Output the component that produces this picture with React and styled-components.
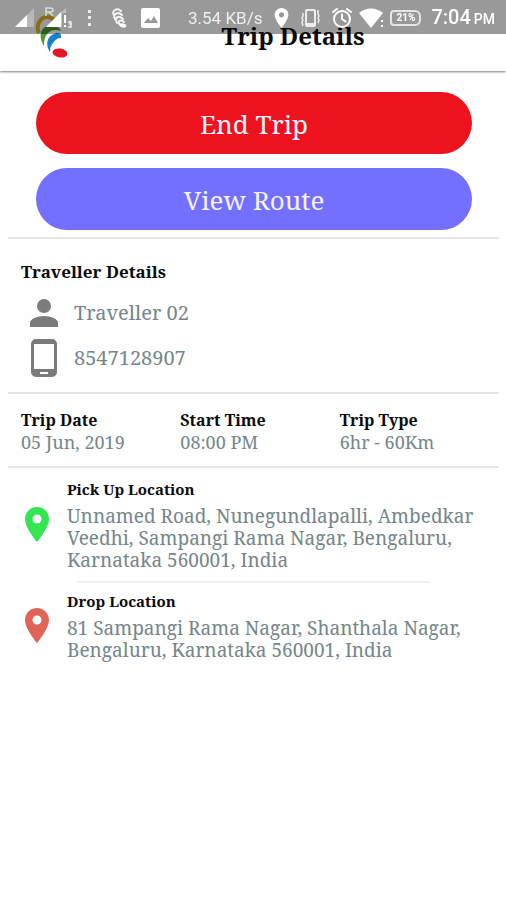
import React from "react";
import styled, { createGlobalStyle } from "styled-components";

const GlobalStyle = createGlobalStyle`
  * { box-sizing: border-box; }
  body {
    margin: 0;
    background: #fefefe;
    color: #0c0c0c;
    font-family: "Noto Serif", "DejaVu Serif Condensed", "DejaVu Serif", serif;
  }
  h1, h2, h3, p, dl, dt, dd { margin: 0; }
  svg { display: block; flex: none; }
`;

const StatusBar = styled.div`
  position: fixed;
  inset: 0 0 auto 0;
  z-index: 2;
  display: flex;
  align-items: center;
  height: 34px;
  padding: 2px 11px 0 15px;
  background: rgba(0, 0, 0, 0.4);
  color: #fff;
  font-family: Roboto, sans-serif;
`;

const StatusGroup = styled.div`
  display: flex;
  align-items: center;
  gap: ${(p) => p.$gap}px;
  margin-left: ${(p) => (p.$end ? "auto" : "0")};
`;

const Speed = styled.span`
  font-size: 17px;
  line-height: 20px;
  color: #f0f0f0;
  white-space: nowrap;
`;

const Clock = styled.time`
  margin-left: 5px;
  font-size: 20px;
  line-height: 24px;
  font-weight: 500;
  white-space: nowrap;
`;

const Meridiem = styled.span`
  margin-left: 3px;
  font-size: 14px;
`;

const Header = styled.header`
  display: grid;
  grid-template-columns: 80px 1fr;
  height: 71px;
  padding-top: 14px;
  background: #fff;
  box-shadow: 0 1px 2px rgba(0, 0, 0, 0.5);
`;

const LogoSlot = styled.div`
  padding-left: 34px;
`;

const Title = styled.h1`
  padding-top: 7px;
  font-size: 24px;
  line-height: 30px;
  font-weight: 700;
  text-align: center;
`;

const Main = styled.main`
  padding: 21px 7px 0 8px;
`;

const Actions = styled.div`
  display: grid;
  gap: 14px;
  padding: 0 27px 7px 28px;
`;

const ActionButton = styled.button`
  height: 62px;
  padding: 2px 16px 0;
  border: 0;
  border-radius: 31px;
  background: ${(p) => p.$color};
  color: #f6f3ff;
  font-family: inherit;
  font-size: 26px;
  line-height: 36px;
  cursor: pointer;
`;

const Divider = styled.hr`
  height: 2px;
  margin: 0 ${(p) => (p.$inset ? 69 : 0)}px;
  border: 0;
  background: ${(p) => (p.$inset ? "#f0f0f0" : "#e5e5e5")};
`;

const Traveller = styled.section`
  padding: 22px 13px 14px;
`;

const Label = styled.h2`
  font-size: ${(p) => (p.$large ? 17 : 15)}px;
  line-height: 22px;
  font-weight: 700;
`;

const ContactList = styled.div`
  display: grid;
  gap: 5px;
  padding-top: 10px;
`;

const ContactRow = styled.div`
  display: grid;
  grid-template-columns: 46px 1fr;
  align-items: center;
  gap: 7px;
  height: 40px;
  color: #75868a;
  font-size: 20px;
  line-height: 28px;

  svg { justify-self: center; }
`;

const Facts = styled.dl`
  display: grid;
  grid-template-columns: repeat(3, 1fr);
  padding: 15px 0 13px 13px;
`;

const FactLabel = styled.dt`
  font-size: 16px;
  line-height: 22px;
  font-weight: 700;
`;

const FactValue = styled.dd`
  font-size: 18px;
  line-height: 22px;
  color: #75868a;
`;

const Place = styled.section`
  display: grid;
  grid-template-columns: 42px 1fr;
  align-items: center;
  padding: ${(p) => (p.$last ? "7px" : "10px")} 10px 10px 17px;
`;

const Address = styled.p`
  padding-top: 5px;
  font-size: 19px;
  line-height: 22px;
  color: #75868a;
`;

const PIN = "M12 0C5.4 0 0 5.3 0 11.9 0 20.7 12 35 12 35s12-14.3 12-23.1C24 5.3 18.6 0 12 0Zm0 16.5a4.5 4.5 0 1 1 0-9 4.5 4.5 0 0 1 0 9Z";

function Pin({ color, width = 24, height = 35 }) {
  return (
    <svg width={width} height={height} viewBox="0 0 24 35" aria-hidden="true">
      <path d={PIN} fill={color} fillRule="evenodd" />
    </svg>
  );
}

function Signals() {
  return (
    <svg width="58" height="22" viewBox="0 0 58 22" aria-label="Signal">
      <path d="M19 1v19H0Z" fill="#fff" opacity=".3" />
      <path d="M12 8v12H0Z" fill="#fff" />
      <path d="M31 9V1h4c4 0 4 4 0 4h-4m3 0 4 4" fill="none" stroke="#ddd" strokeWidth="1.5" />
      <path d="M51 1v5h-4v14H31Z" fill="#fff" opacity=".4" />
      <path d="M46 5v15H31Z" fill="#fff" />
      <path d="M50 8v8m0 2v2" stroke="#fff" strokeWidth="2" />
      <path d="M53 15h3v2h-2 2v3h-3" fill="none" stroke="#eee" strokeWidth="1.5" />
    </svg>
  );
}

function Dots() {
  return (
    <svg width="6" height="20" viewBox="0 0 6 20" fill="#eee" aria-hidden="true">
      <path d="M1 2h3v3H1zM1 8h3v3H1zM1 15h3v3H1z" />
    </svg>
  );
}

function Swirl() {
  return (
    <svg width="16" height="20" viewBox="0 0 16 20" fill="none" stroke="#f4f4f4" strokeWidth="2" strokeLinecap="round" aria-hidden="true">
      <path d="M3 7C0 3 6-1 10 3M4 11C1 6 7 3 11 7M6 15C3 9 8 7 12 11M9 17c-3-4 0-6 4-3" />
      <ellipse cx="12" cy="17.5" rx="3.5" ry="2" transform="rotate(12 12 17.5)" fill="#fff" stroke="none" />
    </svg>
  );
}

function Picture() {
  return (
    <svg width="19" height="20" viewBox="0 0 19 20" aria-hidden="true">
      <rect width="19" height="20" rx="2" fill="#fff" />
      <path d="m3 15 4-5 3 3 3-5 4 7Z" fill="#999" />
    </svg>
  );
}

function Vibrate() {
  return (
    <svg width="19" height="20" viewBox="0 0 19 20" fill="none" stroke="#eee" aria-hidden="true">
      <rect x="5" y="2" width="9" height="16" rx="1" strokeWidth="2" />
      <path d="M5 16h9" strokeWidth="2" />
      <path d="M2 5v3l-1 2 1 2-1 2 1 4M17 2v4l1 2-1 2 1 2-1 3" strokeWidth="1.5" />
    </svg>
  );
}

function Alarm() {
  return (
    <svg width="20" height="20" viewBox="0 0 20 20" fill="none" stroke="#fff" strokeWidth="2" aria-hidden="true">
      <circle cx="10" cy="11" r="8" />
      <path d="M10 6.500V11l3.500 2.500M1 4l4-3M19 4l-4-3" strokeLinecap="round" />
    </svg>
  );
}

function Wifi() {
  return (
    <svg width="26" height="20" viewBox="0 0 26 20" fill="#fff" aria-hidden="true">
      <path d="M0 5C7-1 17-1 24 5L12 20Z" />
      <path d="M22 12h2v2h-2zM22 17h2v2h-2z" />
    </svg>
  );
}

const BatteryIcon = styled.span`
  display: flex;
  align-items: center;
  justify-content: center;
  width: 31px;
  height: 16px;
  border: 2px solid #e6e6e6;
  border-radius: 4px 6px 6px 4px;
  font-size: 10px;
  line-height: 12px;
  font-weight: 700;
`;

function Logo() {
  return (
    <svg width="36" height="44" viewBox="0 0 36 44" fill="none" role="img" aria-label="Company logo">
      <path d="M5 19C1 11 7 3 13 3c4 0 6 1 7 4" stroke="#e1b425" strokeWidth="4" />
      <path d="M10 32C4 23 6 12 16 12c5-1 9 0 11 5-6-2-10-1-13 2-3 3-4 7-4 13Z" fill="#4f9a35" />
      <path d="M16 38C11 31 13 22 20 20c3-2 6-1 7 1v3c-4 0-6 2-8 5-2 2-3 5-3 9Z" fill="#1980cf" />
      <ellipse cx="26" cy="39" rx="7.5" ry="4.5" transform="rotate(9 26 39)" fill="#e71523" />
    </svg>
  );
}

function Person() {
  return (
    <svg width="28" height="28" viewBox="0 0 28 28" fill="#7b7b7b" aria-label="Name">
      <circle cx="14" cy="7" r="7" />
      <path d="M0 28v-4c0-4 7-7 14-7s14 3 14 7v4Z" />
    </svg>
  );
}

function Phone() {
  return (
    <svg width="26" height="38" viewBox="0 0 26 38" aria-label="Phone">
      <path fillRule="evenodd" fill="#7b7b7b" d="M5 0h16a5 5 0 0 1 5 5v28a5 5 0 0 1-5 5H5a5 5 0 0 1-5-5V5a5 5 0 0 1 5-5ZM3 5v25h20V5ZM9 33v2h8v-2Z" />
    </svg>
  );
}

const facts = [
  ["Trip Date", "05 Jun, 2019"],
  ["Start Time", "08:00 PM"],
  ["Trip Type", "6hr - 60Km"],
];

export default function App() {
  return (
    <>
      <GlobalStyle />
      <StatusBar>
        <StatusGroup $gap={18}>
          <StatusGroup $gap={14}>
            <Signals />
            <Dots />
          </StatusGroup>
          <StatusGroup $gap={14}>
            <Swirl />
            <Picture />
          </StatusGroup>
        </StatusGroup>
        <StatusGroup $gap={12} $end>
          <Speed>3.54 KB/s</Speed>
          <Pin color="#fff" width={15} height={20} />
          <Vibrate />
          <StatusGroup $gap={7}>
            <Alarm />
            <StatusGroup $gap={5}>
              <Wifi />
              <BatteryIcon>21%</BatteryIcon>
              <Clock>
                7:04<Meridiem>PM</Meridiem>
              </Clock>
            </StatusGroup>
          </StatusGroup>
        </StatusGroup>
      </StatusBar>
      <Header>
        <LogoSlot>
          <Logo />
        </LogoSlot>
        <Title>Trip Details</Title>
      </Header>
      <Main>
        <Actions>
          <ActionButton type="button" $color="#ed131e">End Trip</ActionButton>
          <ActionButton type="button" $color="#7370ff">View Route</ActionButton>
        </Actions>
        <Divider />
        <Traveller>
          <Label $large>Traveller Details</Label>
          <ContactList>
            <ContactRow>
              <Person />
              <span>Traveller 02</span>
            </ContactRow>
            <ContactRow>
              <Phone />
              <span>8547128907</span>
            </ContactRow>
          </ContactList>
        </Traveller>
        <Divider />
        <Facts>
          {facts.map(([label, value]) => (
            <div key={label}>
              <FactLabel>{label}</FactLabel>
              <FactValue>{value}</FactValue>
            </div>
          ))}
        </Facts>
        <Divider />
        <Place>
          <Pin color="#32e650" />
          <div>
            <Label>Pick Up Location</Label>
            <Address>Unnamed Road, Nunegundlapalli, Ambedkar Veedhi, Sampangi Rama Nagar, Bengaluru, Karnataka 560001, India</Address>
          </div>
        </Place>
        <Divider $inset />
        <Place $last>
          <Pin color="#e06557" />
          <div>
            <Label>Drop Location</Label>
            <Address>81 Sampangi Rama Nagar, Shanthala Nagar, Bengaluru, Karnataka 560001, India</Address>
          </div>
        </Place>
      </Main>
    </>
  );
}
